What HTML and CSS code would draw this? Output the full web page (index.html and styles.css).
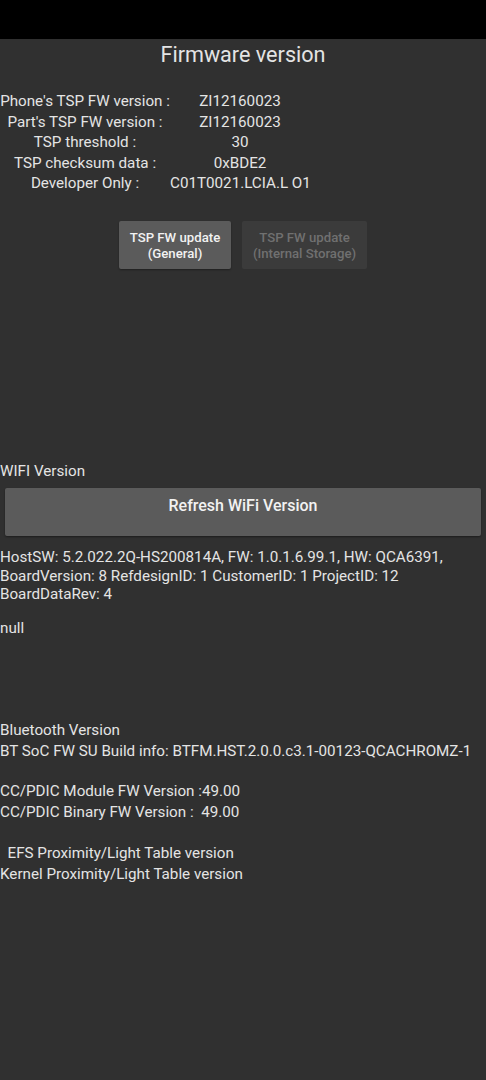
FILE: index.html
```html
<!DOCTYPE html>
<html>
<head>
<meta charset="utf-8">
<link rel="stylesheet" href="styles.css">
</head>
<body>
<div class="statusbar"></div>
<main class="screen">
  <h1 class="title">Firmware version</h1>
  <div class="tsp">
    <span class="lbl">Phone's TSP FW version :</span><span class="val">ZI12160023</span>
    <span class="lbl">Part's TSP FW version :</span><span class="val">ZI12160023</span>
    <span class="lbl">TSP threshold :</span><span class="val">30</span>
    <span class="lbl">TSP checksum data :</span><span class="val">0xBDE2</span>
    <span class="lbl">Developer Only :</span><span class="val">C01T0021.LCIA.L O1</span>
  </div>
  <div class="tsp-buttons">
    <button class="btn btn-general">TSP FW update<br>(General)</button>
    <button class="btn btn-disabled">TSP FW update<br>(Internal Storage)</button>
  </div>
  <div class="wifi">
    <p class="section-label">WIFI Version</p>
    <button class="btn-refresh">Refresh WiFi Version</button>
    <p class="info">HostSW: 5.2.022.2Q-HS200814A, FW: 1.0.1.6.99.1, HW: QCA6391,<br>BoardVersion: 8 RefdesignID: 1 CustomerID: 1 ProjectID: 12<br>BoardDataRev: 4</p>
    <p class="null">null</p>
  </div>
  <div class="bt">
    <p class="line">Bluetooth Version</p>
    <p class="line">BT SoC FW SU Build info: BTFM.HST.2.0.0.c3.1-00123-QCACHROMZ-1</p>
  </div>
  <div class="pdic">
    <p class="line">CC/PDIC Module FW Version :49.00</p>
    <p class="line">CC/PDIC Binary FW Version :&nbsp; 49.00</p>
  </div>
  <div class="prox">
    <p class="line">&nbsp;&nbsp;EFS Proximity/Light Table version</p>
    <p class="line">Kernel Proximity/Light Table version</p>
  </div>
</main>
</body>
</html>
```
FILE: styles.css
```css
html, body {
  margin: 0;
  padding: 0;
  background: #303030;
}
body {
  width: 486px;
  height: 1080px;
  overflow: hidden;
  font-family: Roboto, "Noto Sans", sans-serif;
  color: #e4e4e4;
}
.statusbar {
  height: 39px;
  background: #000;
}
.screen {
  display: flex;
  flex-direction: column;
}
.title {
  margin: 0;
  padding-top: 3px;
  height: 40px;
  line-height: 26px;
  font-size: 21.6px;
  font-weight: 400;
  text-align: center;
  color: #e4e4e4;
}
.tsp {
  display: grid;
  grid-template-columns: 170px 140px;
  font-size: 15.2px;
  line-height: 20.5px;
  margin-top: 9px;
}
.lbl, .val {
  text-align: center;
  white-space: nowrap;
}
.tsp-buttons {
  display: flex;
  justify-content: center;
  gap: 11px;
  margin-top: 27px;
}
.btn {
  border: none;
  border-radius: 2px;
  height: 48px;
  padding: 3px 6px 0;
  font-family: Roboto, sans-serif;
  font-weight: 500;
  font-size: 13.2px;
  line-height: 16px;
}
.btn-general {
  width: 112px;
  background: #5b5b5b;
  color: #f2f2f2;
  box-shadow: 0 1px 2px rgba(0,0,0,0.35);
}
.btn-disabled {
  width: 125px;
  background: #3b3b3b;
  color: #707070;
}
.wifi {
  margin-top: 192px;
  display: flex;
  flex-direction: column;
}
.section-label, .line, .info, .null {
  margin: 0;
  font-size: 15.2px;
  line-height: 20.5px;
  white-space: nowrap;
}
.btn-refresh {
  margin: 7px 5px 0;
  height: 48px;
  padding: 0 0 14px;
  border: none;
  border-radius: 2px;
  background: #5b5b5b;
  color: #f2f2f2;
  font-family: Roboto, sans-serif;
  font-weight: 500;
  font-size: 16px;
  box-shadow: 0 1px 2px rgba(0,0,0,0.4);
}
.info {
  margin-top: 12px;
  line-height: 18.5px;
}
.null {
  margin-top: 14px;
}
.bt {
  margin-top: 82px;
}
.pdic {
  margin-top: 20px;
}
.prox {
  margin-top: 21px;
}
```
